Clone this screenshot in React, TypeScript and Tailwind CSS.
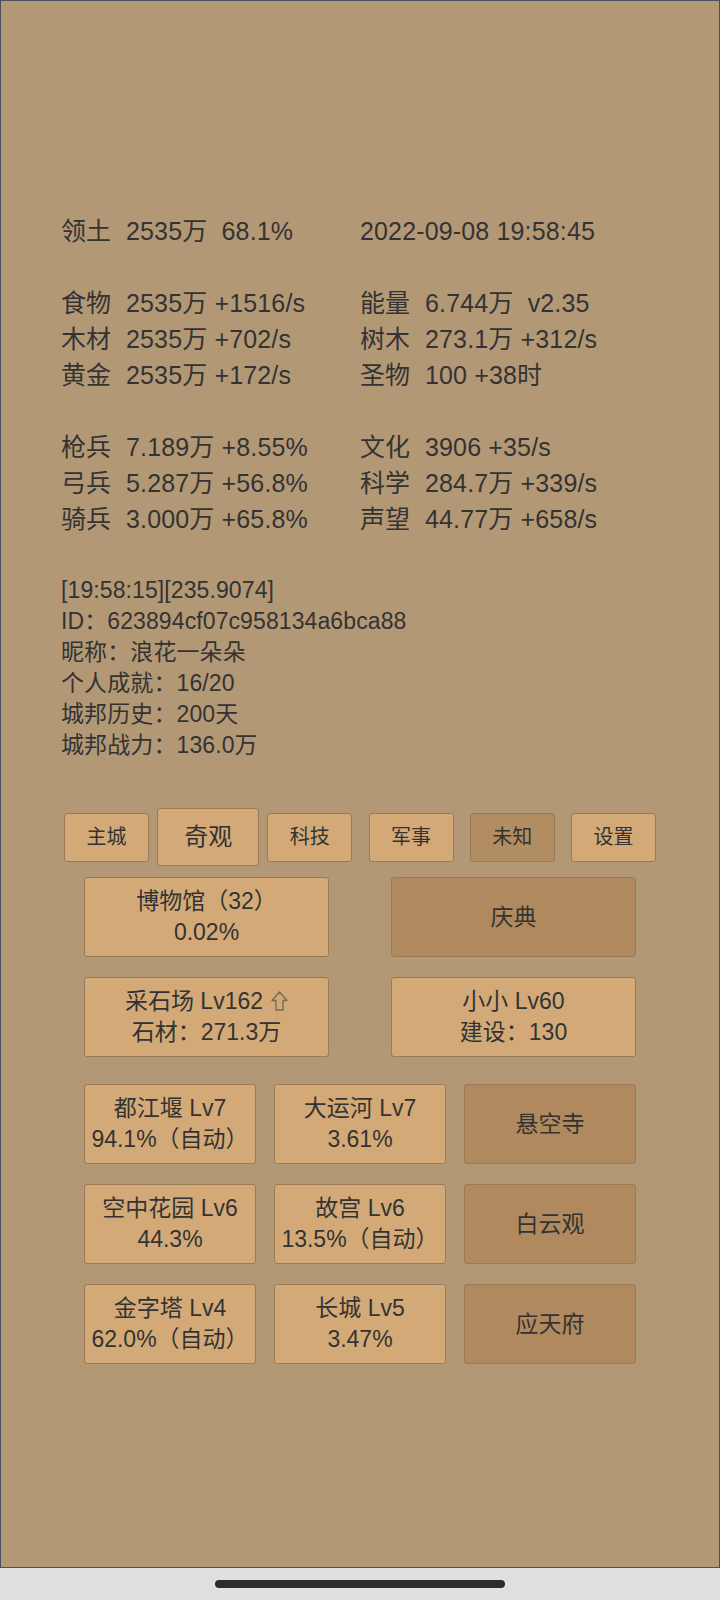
import type { ReactNode } from 'react';

type Cell = { label?: string; value: string } | null;

const statRows: [Cell, Cell][] = [
  [{ label: '领土', value: '2535万  68.1%' }, { value: '2022-09-08 19:58:45' }],
  [null, null],
  [{ label: '食物', value: '2535万 +1516/s' }, { label: '能量', value: '6.744万  v2.35' }],
  [{ label: '木材', value: '2535万 +702/s' }, { label: '树木', value: '273.1万 +312/s' }],
  [{ label: '黄金', value: '2535万 +172/s' }, { label: '圣物', value: '100 +38时' }],
  [null, null],
  [{ label: '枪兵', value: '7.189万 +8.55%' }, { label: '文化', value: '3906 +35/s' }],
  [{ label: '弓兵', value: '5.287万 +56.8%' }, { label: '科学', value: '284.7万 +339/s' }],
  [{ label: '骑兵', value: '3.000万 +65.8%' }, { label: '声望', value: '44.77万 +658/s' }],
];

const logLines = [
  '[19:58:15][235.9074]',
  'ID：623894cf07c958134a6bca88',
  '昵称：浪花一朵朵',
  '个人成就：16/20',
  '城邦历史：200天',
  '城邦战力：136.0万',
];

const tabs = [
  { label: '主城' },
  { label: '奇观', active: true },
  { label: '科技' },
  { label: '军事' },
  { label: '未知', dark: true },
  { label: '设置' },
];

const wonders: { title?: string; sub?: string; name?: string }[] = [
  { title: '都江堰 Lv7', sub: '94.1%（自动）' },
  { title: '大运河 Lv7', sub: '3.61%' },
  { name: '悬空寺' },
  { title: '空中花园 Lv6', sub: '44.3%' },
  { title: '故宫 Lv6', sub: '13.5%（自动）' },
  { name: '白云观' },
  { title: '金字塔 Lv4', sub: '62.0%（自动）' },
  { title: '长城 Lv5', sub: '3.47%' },
  { name: '应天府' },
];

function StatCell({ cell }: { cell: Cell }) {
  if (!cell) return <div>&nbsp;</div>;
  return (
    <div className="flex whitespace-pre">
      {cell.label && <span className="w-[65px] shrink-0 tracking-normal">{cell.label}</span>}
      <span>{cell.value}</span>
    </div>
  );
}

function Card({ children, dark }: { children: ReactNode; dark?: boolean }) {
  return (
    <div
      className={`flex h-[80px] flex-col items-center justify-center whitespace-nowrap rounded-[3px] border border-[#9a7a56] text-[23px] leading-[31px] ${
        dark ? 'bg-[#b08a5e]' : 'bg-[#d3aa77]'
      }`}
    >
      {children}
    </div>
  );
}

function UpArrow() {
  return (
    <svg width="17" height="20" viewBox="0 0 17 20" className="ml-[8px] inline-block align-[-2px]">
      <path d="M8.5 1 L16 9.5 L12 9.5 L12 19 L5 19 L5 9.5 L1 9.5 Z" fill="none" stroke="#7c6a55" strokeWidth="1.4" strokeLinejoin="round" />
    </svg>
  );
}

export default function App() {
  return (
    <div className="flex min-h-[1600px] w-[720px] flex-col bg-[#e0e0e0] font-['Liberation_Sans','Noto_Sans_CJK_SC',sans-serif] text-[#333333]">
      <div className="h-[1568px] border border-[#4a5260] bg-[#b39875]">
        <div className="grid grid-cols-2 px-[60px] pt-[212px] text-[25px] leading-[36px] tracking-[0.15px]">
          {statRows.map((row, i) => (
            <div key={i} className="contents">
              <StatCell cell={row[0]} />
              <StatCell cell={row[1]} />
            </div>
          ))}
        </div>

        <div className="mt-[38px] px-[60px] text-[23px] leading-[31px] tracking-[0.1px]">
          {logLines.map((line) => (
            <p key={line}>{line}</p>
          ))}
        </div>

        <div className="mt-[47px] flex h-[58px] items-center px-[55px]">
          {tabs.map((t) => (
            <div key={t.label} className="flex flex-1 justify-center">
              {t.active ? (
                <div className="flex h-[58px] w-[102px] items-center justify-center rounded-[3px] border border-[#9a7a56] bg-[#d3aa77] text-[24px]">
                  {t.label}
                </div>
              ) : (
                <div
                  className={`flex h-[49px] w-[85px] items-center justify-center rounded-[3px] border border-[#9a7a56] text-[20px] ${
                    t.dark ? 'bg-[#b38d62]' : 'bg-[#d3aa77]'
                  }`}
                >
                  {t.label}
                </div>
              )}
            </div>
          ))}
        </div>

        <div className="mt-[11px] grid grid-cols-2 gap-x-[62px] gap-y-[20px] px-[83px]">
          <Card>
            <p>博物馆（32）</p>
            <p>0.02%</p>
          </Card>
          <Card dark>
            <p>庆典</p>
          </Card>
          <Card>
            <p>
              采石场 Lv162
              <UpArrow />
            </p>
            <p>石材：271.3万</p>
          </Card>
          <Card>
            <p>小小 Lv60</p>
            <p>建设：130</p>
          </Card>
        </div>

        <div className="mt-[27px] grid grid-cols-3 gap-x-[18px] gap-y-[20px] px-[83px]">
          {wonders.map((w, i) =>
            w.name ? (
              <Card key={i} dark>
                <p>{w.name}</p>
              </Card>
            ) : (
              <Card key={i}>
                <p>{w.title}</p>
                <p>{w.sub}</p>
              </Card>
            )
          )}
        </div>
      </div>

      <div className="flex h-[32px] items-center justify-center">
        <div className="h-[8px] w-[290px] rounded-full bg-[#2b2b2b]" />
      </div>
    </div>
  );
}
